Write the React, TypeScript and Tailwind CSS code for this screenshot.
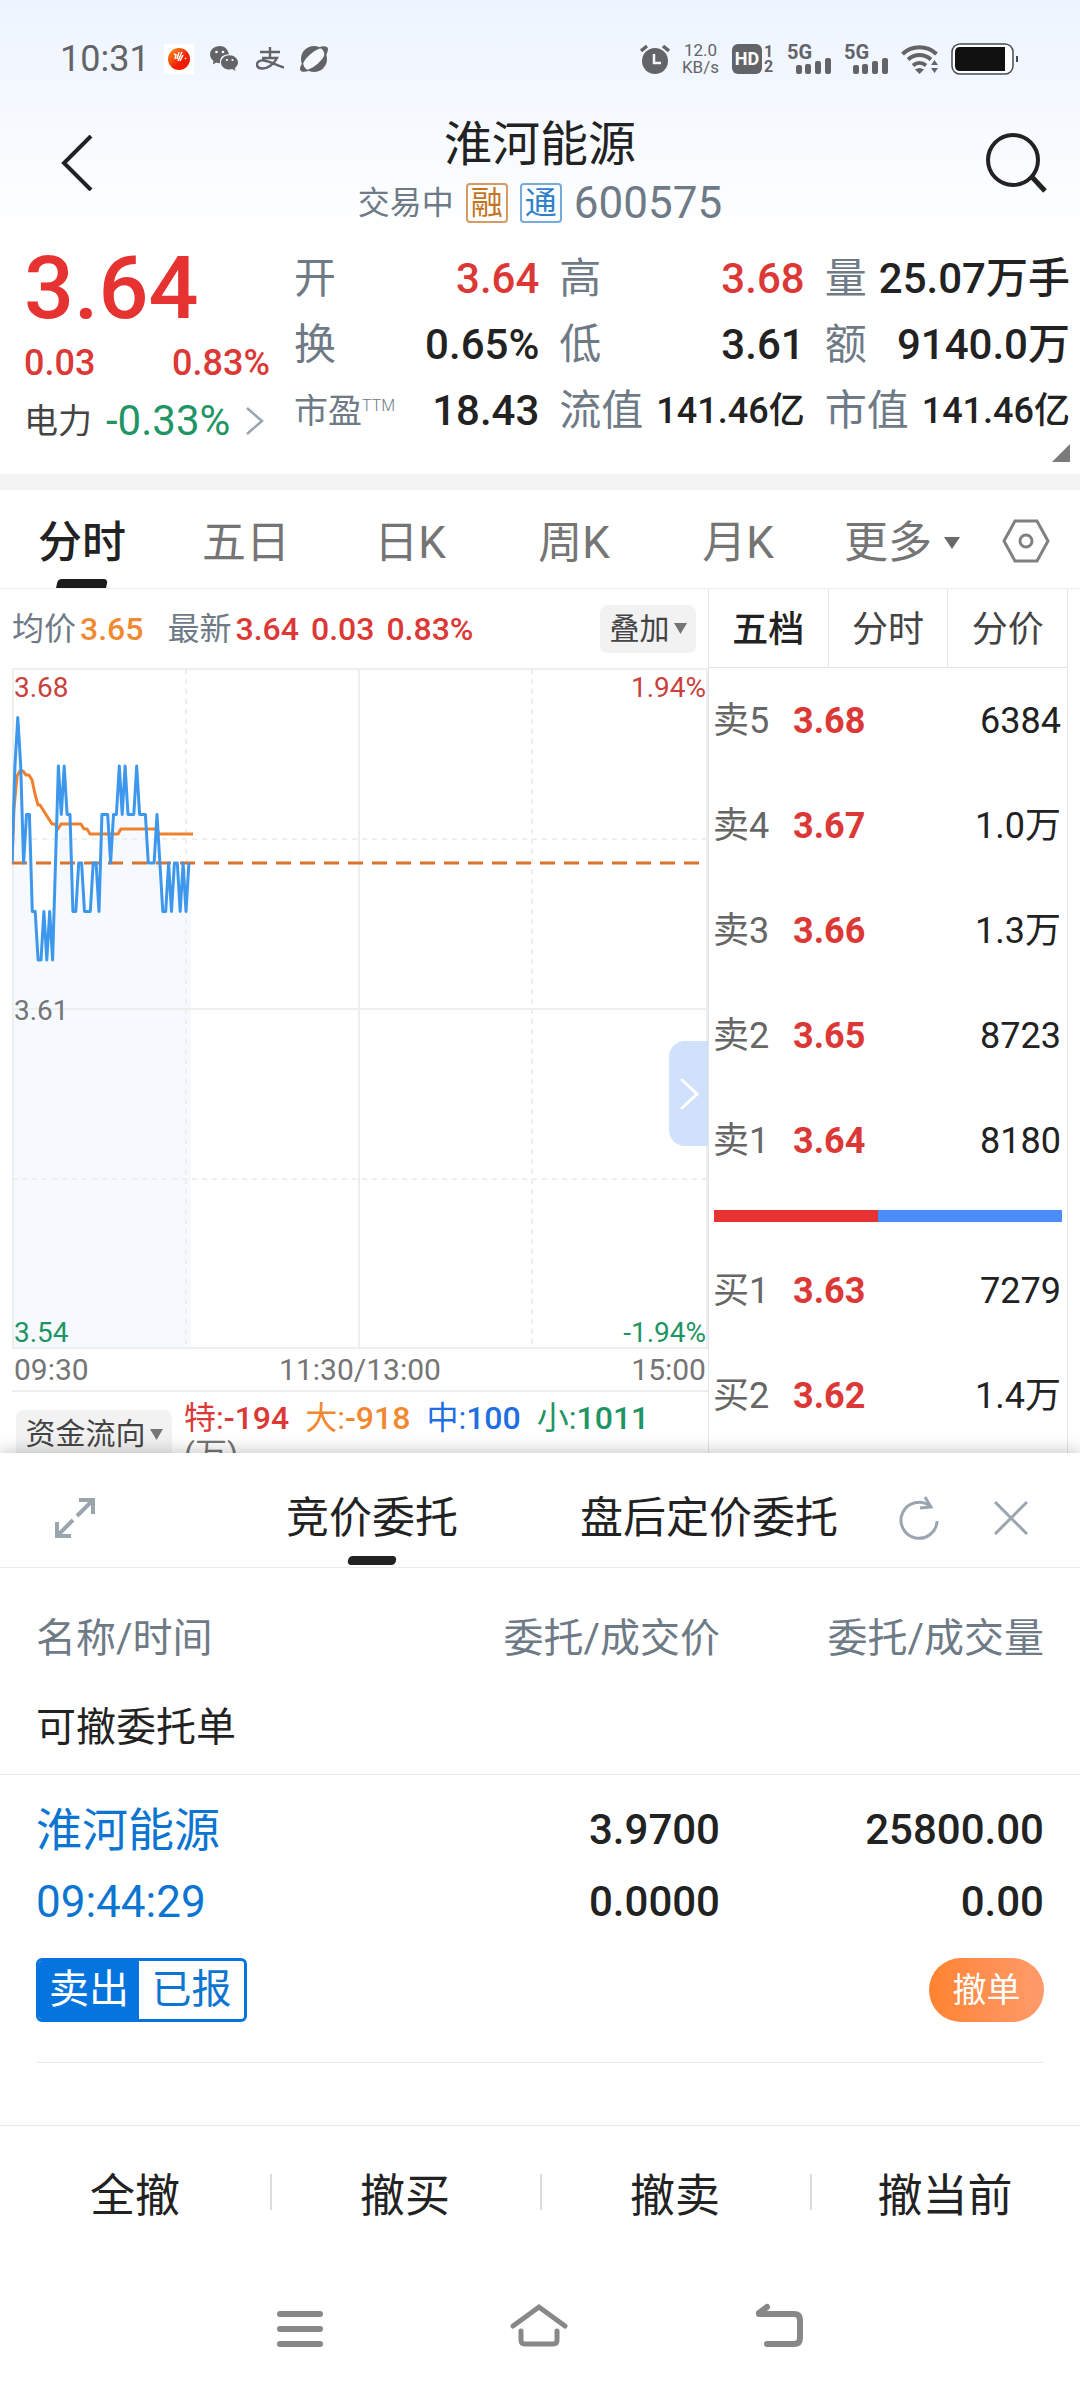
import { ReactNode } from "react";
import clsx from "clsx";

const periods = ["分时", "五日", "日K", "周K", "月K"];

const asks = [
  { label: "卖5", price: "3.68", volume: "6384" },
  { label: "卖4", price: "3.67", volume: "1.0万" },
  { label: "卖3", price: "3.66", volume: "1.3万" },
  { label: "卖2", price: "3.65", volume: "8723" },
  { label: "卖1", price: "3.64", volume: "8180" },
];

const bids = [
  { label: "买1", price: "3.63", volume: "7279" },
  { label: "买2", price: "3.62", volume: "1.4万" },
];

const flows = [
  { text: "特:", value: "-194", color: "text-[#dc3836]" },
  { text: "大:", value: "-918", color: "text-[#f18932]" },
  { text: "中:", value: "100", color: "text-[#1f6fe0]" },
  { text: "小:", value: "1011", color: "text-[#1f9464]" },
];

// price per minute, in cents above or below 3.64
const ticks = [
  0, 2, 3, 2, 0, 1, 1, -1, -1, -2, -2, -1, -2, -1, -2, 0, 2, 1, 2, 1, 1, -1, -1, 0, 0, -1, -1, -1, 0, 0, -1, 1, 1, 1,
  0, 1, 1, 2, 1, 2, 1, 1, 1, 2, 1, 1, 1, 0, 0, 0, 1, 0, -1, -1, 0, -1, 0, 0, -1, 0, -1, 0,
];
const pricePoints = ticks.map((t, i) => `${(i * 2.9).toFixed(1)},${195 - t * 48.5}`).join(" ");
const averagePoints =
  "0,195 2,140 5,108 8,103 11,103 14,107 17,107 20,112 23,126 26,137 28,137 40,156 43,156 46,161 49,156 69,156 72,161 75,161 78,166 106,166 109,161 145,161 147,166 181,166";

const SignalBars = () => (
  <div className="flex h-[30px] w-11 flex-col">
    <span className="text-[20px] font-bold leading-4">5G</span>
    <svg className="-mt-0.5 ml-2 h-4 w-9" viewBox="0 0 36 16" fill="#636467">
      <rect x="1" y="7" width="6" height="9" rx="2" />
      <rect x="10" y="6" width="6" height="10" rx="2" />
      <rect x="20" y="3" width="6" height="13" rx="2" />
      <rect x="30" y="0" width="6" height="16" rx="2" />
    </svg>
  </div>
);

const StatusBar = () => (
  <div className="flex h-[118px] items-center pl-[60px] pr-[62px] text-[#636467]">
    <span className="w-[104px] text-4xl">10:31</span>
    <svg className="h-[30px] w-[30px]" viewBox="0 0 30 30">
      <defs>
        <linearGradient id="ball" x1="0" y1="0" x2="1" y2="1">
          <stop offset="0" stopColor="#ff9a1f" />
          <stop offset="0.6" stopColor="#f01d05" />
        </linearGradient>
      </defs>
      <rect width="30" height="30" fill="#fff" />
      <circle cx="15" cy="15" r="11" fill="url(#ball)" />
      <path d="M10 10l2 1-1 4M15 8l-2 7M18 8l-4 9M19 11l-3 6M21 14l1 1" stroke="#fff" strokeWidth="1.500" fill="none" />
    </svg>
    <svg className="ml-4 h-[26px] w-7" viewBox="0 0 28 26" fill="#636467">
      <path d="M10 0C4 0 0 4 0 8.500c0 2.500 1.300 4.800 3.500 6.300L2.800 18.500l3.400-1.900c1.300.4 2.700.6 4 .5C9 12 13 8 19 8.200 18 3.500 14.500 0 10 0z" />
      <circle cx="6.500" cy="6" r="1.300" fill="#fff" />
      <circle cx="13" cy="6" r="1.300" fill="#fff" />
      <path d="M19.500 9.200c-5 0-8.500 3.300-8.500 7.200s3.800 7.100 8.500 7.100c1 0 2-.1 2.900-.4l3.200 1.900-.8-3c2-1.400 3.200-3.400 3.200-5.600 0-3.900-3.700-7.200-8.500-7.200z" />
      <circle cx="17" cy="14" r="1.100" fill="#fff" />
      <circle cx="22.500" cy="14" r="1.100" fill="#fff" />
    </svg>
    <svg className="ml-[18px] h-6 w-7" viewBox="0 0 28 24" fill="none" stroke="#636467" strokeWidth="2.400">
      <path d="M4 5h20M14 0v11M6 11h15c-3 6-9 10.500-14.500 10.500C2.500 21.500 1 19.500 1 17.500c0-3 3-4.500 7-4 6 .8 12 4.500 20 7" />
    </svg>
    <svg className="ml-[15px] h-[30px] w-[30px]" viewBox="0 0 30 30">
      <circle cx="15" cy="15" r="13" fill="#636467" />
      <ellipse cx="15" cy="15" rx="15" ry="6" transform="rotate(-42 15 15)" fill="#f4f8ff" />
      <path d="M20 3c5-1.500 9-1 9 2 0 2-1 5-4 9 1-5 0-8-5-11zM10 27c-5 1.500-9 1-9-2 0-2 1-4 3-7 0 4 2 7 6 9z" fill="#636467" />
    </svg>

    <svg className="ml-auto h-[30px] w-[30px]" viewBox="0 0 30 30">
      <circle cx="15" cy="17" r="13" fill="#636467" />
      <path d="M1 7l6-5M29 7l-6-5" stroke="#636467" strokeWidth="3.500" />
      <path d="M14 10v9h7" stroke="#f4f8ff" strokeWidth="2.500" fill="none" />
    </svg>
    <div className="ml-3 flex flex-col items-center text-[17px] leading-[17px]">
      <span>12.0</span>
      <span>KB/s</span>
    </div>
    <div className="ml-[13px] flex h-[30px] w-[42px] gap-0.5 font-bold">
      <span className="flex w-[30px] items-center justify-center rounded-md bg-[#636467] text-[18px] text-white">HD</span>
      <span className="flex flex-col text-[16px] leading-[15px]">
        <span>1</span>
        <span>2</span>
      </span>
    </div>
    <div className="ml-[13px] flex gap-[13px]">
      <SignalBars />
      <SignalBars />
    </div>
    <svg className="ml-[13px] h-[30px] w-[38px]" viewBox="0 0 38 30" fill="none" stroke="#636467" strokeWidth="4">
      <path d="M1.500 10C11 1 26 1 35.500 10M7 15.500c7-6 16-6 23 0M12 21.500c4-3.500 9-3.500 13 0" />
      <path d="M14 25.500c3-2 6-2 9 0L18.500 30z" fill="#636467" stroke="none" />
      <path d="M30 21l3.500-5 3.500 5zM30 24l3.500 5 3.500-5z" fill="#636467" stroke="none" />
    </svg>
    <svg className="ml-3 h-8 w-[67px]" viewBox="0 0 67 32">
      <rect x="1" y="1" width="61" height="30" rx="8" fill="#fff" stroke="#444b55" strokeWidth="1.500" />
      <path d="M9 4h45v24H9q-5 0-5-5V9q0-5 5-5z" fill="#111" />
      <rect x="65" y="13" width="2" height="6" fill="#444b55" />
    </svg>
  </div>
);

const Header = () => (
  <header className="flex items-start justify-between px-8 pb-3">
    <button aria-label="返回" className="flex h-[90px] w-[90px] items-center justify-center">
      <svg className="h-14 w-8" viewBox="0 0 32 56" fill="none" stroke="#222" strokeWidth="4">
        <path d="M30 1L3 28l27 27" />
      </svg>
    </button>
    <div className="flex flex-col items-center">
      <h1 className="text-5xl leading-[54px] text-[#222]">淮河能源</h1>
      <div className="mt-2 flex h-[46px] items-center gap-3 text-[32px] text-[#6e7a86]">
        <span>交易中</span>
        <span className="flex h-10 w-[42px] items-center justify-center rounded border-2 border-[#d59b63] text-[#c4741f]">融</span>
        <span className="flex h-10 w-[42px] items-center justify-center rounded border-2 border-[#74abdc] text-[#2f80c8]">通</span>
        <span className="text-[44px]">600575</span>
      </div>
    </div>
    <button aria-label="搜索" className="flex h-[90px] w-[90px] items-center justify-end">
      <svg className="h-[62px] w-[62px]" viewBox="0 0 62 62" fill="none" stroke="#222" strokeWidth="4">
        <circle cx="27" cy="28" r="25" />
        <path d="M46 45l13 14" strokeWidth="5" />
      </svg>
    </button>
  </header>
);

const Stat = ({ label, value, red, small }: { label: ReactNode; value: string; red?: boolean; small?: boolean }) => (
  <div className="flex h-[66px] items-center justify-between whitespace-nowrap">
    <dt className="text-[42px] text-[#6e7a86]">{label}</dt>
    <dd className={clsx("font-medium", small ? "text-4xl" : "text-[42px]", red ? "text-[#dc3836]" : "text-[#222]")}>{value}</dd>
  </div>
);

const Quote = () => (
  <section className="flex border-b-[16px] border-[#f4f4f4] pl-6 pr-2.5">
    <div className="w-[270px] shrink-0">
      <div className="flex h-[100px] items-center text-[88px] font-medium text-[#e63331]">3.64</div>
      <div className="flex h-[50px] items-center justify-between pr-6 text-4xl font-medium text-[#dc3836]">
        <span>0.03</span>
        <span>0.83%</span>
      </div>
      <a href="#" className="flex h-[66px] items-center text-[#444]">
        <span className="w-[82px] text-[34px]">电力</span>
        <span className="w-[140px] text-[42px] text-[#1f9464]">-0.33%</span>
        <svg className="h-7 w-[18px]" viewBox="0 0 18 28" fill="none" stroke="#9aa4ae" strokeWidth="2.500">
          <path d="M1 1l15 13L1 27" />
        </svg>
      </a>
    </div>
    <div className="flex-1">
      <dl className="grid grid-cols-3 gap-x-5 pt-2">
        <Stat label="开" value="3.64" red />
        <Stat label="高" value="3.68" red />
        <Stat label="量" value="25.07万手" />
        <Stat label="换" value="0.65%" />
        <Stat label="低" value="3.61" />
        <Stat label="额" value="9140.0万" />
        <Stat
          label={
            <span className="flex items-start text-[34px]">
              市盈<span className="text-base font-light">TTM</span>
            </span>
          }
          value="18.43"
        />
        <Stat label="流值" value="141.46亿" small />
        <Stat label="市值" value="141.46亿" small />
      </dl>
      <svg className="mb-3 ml-auto h-[18px] w-[18px]" viewBox="0 0 18 18" fill="#7a7a7a">
        <path d="M18 0v18H0z" />
      </svg>
    </div>
  </section>
);

const PeriodTabs = () => (
  <nav className="flex h-[99px] border-b border-[#eee] text-[44px] text-[#757575]">
    {periods.map((name, i) => (
      <button
        key={name}
        className={clsx("relative flex flex-1 items-center justify-center pt-2", i === 0 && "font-medium text-[#222]")}
      >
        {name}
        {i === 0 && <span className="absolute bottom-0 h-[9px] w-[50px] -skew-x-12 rounded-t-sm bg-[#1c1c1c]" />}
      </button>
    ))}
    <button className="flex flex-1 items-center justify-center gap-3 pt-2">
      更多
      <svg className="h-3 w-4" viewBox="0 0 16 12" fill="#6a6a6a">
        <path d="M0 0h16L8 12z" />
      </svg>
    </button>
    <button aria-label="设置" className="flex w-24 items-center pl-[18px] pt-1">
      <svg className="h-[46px] w-12" viewBox="0 0 48 46" fill="none" stroke="#808080" strokeWidth="3">
        <path d="M13 3h22l11 20-11 20H13L2 23z" />
        <circle cx="24" cy="23" r="6" />
      </svg>
    </button>
  </nav>
);

const Chart = () => (
  <div className="relative">
    <svg className="block h-[681px] w-full" viewBox="0 0 696 681" preserveAspectRatio="none" fill="none">
      <polygon points={`0,681 ${pricePoints} 179,195 179,681`} fill="#f6faff" />
      <g stroke="#ebf0ee" strokeWidth="2">
        <path d="M0 341h696M347 1v680" />
        <path d="M0 171h696M0 511h696M174 1v680M520 1v680" strokeDasharray="5 5" />
        <rect x="1" y="1" width="694" height="679" />
      </g>
      <path d="M0 195h690" stroke="#dc722b" strokeWidth="3" strokeDasharray="15 9" />
      <polyline points={averagePoints} stroke="#ee8130" strokeWidth="3" strokeLinejoin="round" />
      <polyline points={pricePoints} stroke="#3d97ec" strokeWidth="3" strokeLinejoin="round" />
    </svg>
    <div className="absolute inset-0 flex flex-col justify-between px-0.5 text-[28px] leading-8">
      <div className="flex justify-between pt-1 text-[#c9413e]">
        <span>3.68</span>
        <span>1.94%</span>
      </div>
      <span className="text-[#757575]">3.61</span>
      <div className="flex justify-between text-[#1f9464]">
        <span>3.54</span>
        <span>-1.94%</span>
      </div>
    </div>
    <button
      aria-label="展开"
      className="absolute right-0 top-[373px] flex h-[105px] w-[39px] items-center justify-center rounded-l-2xl bg-[#cfe1fb]"
    >
      <svg className="h-8 w-5" viewBox="0 0 20 32" fill="none" stroke="#fff" strokeWidth="3" strokeLinecap="round">
        <path d="M3 2l15 14L3 30" />
      </svg>
    </button>
  </div>
);

const Caret = () => (
  <svg className="h-[11px] w-[13px]" viewBox="0 0 13 11" fill="#757575">
    <path d="M0 0h13L6.500 11z" />
  </svg>
);

const Book = () => {
  const row = (r: { label: string; price: string; volume: string }) => (
    <tr key={r.label} className="h-[105px]">
      <th scope="row" className="w-[84px] pl-1 text-left font-normal text-[#666]">
        {r.label}
      </th>
      <td className="font-bold text-[#dc3836]">{r.price}</td>
      <td className="pr-[6px] text-right text-[#222]">{r.volume}</td>
    </tr>
  );

  return (
    <div className="w-[360px] shrink-0 border-x border-[#e4e4e4]">
      <div className="flex h-[79px] divide-x divide-[#e4e4e4] border-b border-[#e4e4e4] text-4xl text-[#444]">
        <button className="flex-1 pt-1 font-medium text-[#222]">五档</button>
        <button className="flex-1 pt-1">分时</button>
        <button className="flex-1 pt-1">分价</button>
      </div>
      <table className="w-full text-4xl">
        <tbody>
          {asks.map(row)}
          <tr className="h-[45px]">
            <td colSpan={3} className="px-[5px]">
              <div className="flex h-3 bg-[#4a8dfb]">
                <div className="w-[47%] bg-[#e63331]" />
              </div>
            </td>
          </tr>
          {bids.map(row)}
        </tbody>
      </table>
    </div>
  );
};

const Market = () => (
  <section className="flex h-[864px] overflow-hidden px-3">
    <div className="min-w-0 flex-1">
      <div className="flex h-[79px] items-center pr-3 text-[32px]">
        <span className="text-[#6e7a86]">均价</span>
        <span className="ml-1 font-medium text-[#f18932]">3.65</span>
        <span className="ml-6 text-[#6e7a86]">最新</span>
        <span className="ml-1 flex gap-3 font-medium text-[#dc3836]">
          <span>3.64</span>
          <span>0.03</span>
          <span>0.83%</span>
        </span>
        <button className="ml-auto flex h-12 w-24 items-center justify-center gap-1 rounded-lg bg-[#f2f2f2] text-[30px] text-[#444]">
          叠加
          <Caret />
        </button>
      </div>
      <Chart />
      <div className="flex h-[43px] items-center justify-between border-b-2 border-[#ebf0ee] px-0.5 text-[30px] text-[#757575]">
        <span>09:30</span>
        <span>11:30/13:00</span>
        <span>15:00</span>
      </div>
      <div className="flex items-start pl-1 text-[32px] leading-9">
        <button className="mt-[18px] flex h-12 w-[156px] shrink-0 items-center justify-center gap-1 rounded-lg bg-[#f2f2f2] text-[30px] text-[#444]">
          资金流向
          <Caret />
        </button>
        <div className="ml-3 pt-2">
          <div className="flex gap-4">
            {flows.map((f) => (
              <span key={f.text} className={f.color}>
                {f.text}
                <span className="font-medium">{f.value}</span>
              </span>
            ))}
          </div>
          <div className="text-[#757575]">(万)</div>
        </div>
      </div>
    </div>
    <Book />
  </section>
);

const Orders = () => (
  <section className="relative flex-1 bg-white shadow-[0_-2px_16px_rgba(0,0,0,0.22)]">
    <div className="flex h-[115px] items-center border-b border-[#ebebeb] pt-4 text-[#222]">
      <button aria-label="全屏" className="flex w-[150px] justify-center">
        <svg className="h-10 w-10" viewBox="0 0 40 40" fill="none" stroke="#9ba5af" strokeWidth="4">
          <path d="M24 2h14v14M38 2L22 18M2 24v14h14M2 38l16-16" />
        </svg>
      </button>
      <div className="flex h-full flex-1 justify-end gap-[122px] pr-11 text-[43px]">
        <button className="relative flex items-center justify-center">
          竞价委托
          <span className="absolute bottom-[2px] h-[9px] w-12 -skew-x-12 rounded-sm bg-[#222]" />
        </button>
        <button>盘后定价委托</button>
      </div>
      <button aria-label="刷新" className="flex w-[74px] justify-center">
        <svg className="h-11 w-10" viewBox="0 0 40 44" fill="none" stroke="#9ba5af" strokeWidth="3">
          <path d="M38 25A18 18 0 1 1 31 10" />
          <path d="M26 1l6 10-11 1" />
        </svg>
      </button>
      <button aria-label="关闭" className="mr-3.5 flex w-[110px] justify-center">
        <svg className="h-[34px] w-[34px]" viewBox="0 0 34 34" fill="none" stroke="#9ba5af" strokeWidth="3">
          <path d="M1 1l32 32M33 1L1 33" />
        </svg>
      </button>
    </div>

    <table className="w-full text-[42px] text-[#222]">
      <thead>
        <tr className="h-[138px] text-[40px] text-[#6e7a86]">
          <th className="pl-9 pt-1 text-left font-normal">名称/时间</th>
          <th className="w-[36%] pt-1 text-right font-normal">委托/成交价</th>
          <th className="w-1/3 pr-9 pt-1 text-right font-normal">委托/成交量</th>
        </tr>
      </thead>
      <tbody>
        <tr className="h-[68px] border-b border-[#ebebeb] text-[40px]">
          <th colSpan={3} scope="rowgroup" className="pb-6 pl-9 text-left font-normal">
            可撤委托单
          </th>
        </tr>
        <tr className="h-[92px]">
          <td className="pl-9 pt-5 text-[46px] text-[#0b75d1]">淮河能源</td>
          <td className="pt-5 text-right font-medium">3.9700</td>
          <td className="pr-9 pt-5 text-right font-medium">25800.00</td>
        </tr>
        <tr className="h-[72px]">
          <td className="pl-9 text-[44px] text-[#0b75d1]">09:44:29</td>
          <td className="text-right font-medium">0.0000</td>
          <td className="pr-9 text-right font-medium">0.00</td>
        </tr>
      </tbody>
    </table>
    <div className="mx-9 flex items-start justify-between border-b border-[#ebebeb] pb-10 pt-5">
      <div className="flex h-16 overflow-hidden rounded-md border-[3px] border-[#0674df] text-[40px] text-[#0b75d1]">
        <span className="flex w-[100px] items-center justify-center bg-[#0674df] text-white">卖出</span>
        <span className="flex w-[105px] items-center justify-center">已报</span>
      </div>
      <button className="h-16 w-[115px] rounded-full bg-linear-to-r from-[#ff832d] to-[#ff9b6b] text-[34px] text-white">撤单</button>
    </div>
    <div className="mt-[62px] flex border-t border-[#ebebeb] py-12 text-[45px] text-[#222]">
      {["全撤", "撤买", "撤卖", "撤当前"].map((name, i) => (
        <button key={name} className="relative h-9 flex-1">
          {i > 0 && <span className="absolute left-0 top-0 h-9 w-0.5 bg-[#ddd]" />}
          {name}
        </button>
      ))}
    </div>
  </section>
);

const SystemNav = () => (
  <nav className="relative flex h-[126px] items-center justify-center gap-[187px] bg-white">
    <button aria-label="菜单">
      <svg className="h-11 w-[46px]" viewBox="0 0 46 44" stroke="#888" strokeWidth="6" strokeLinecap="round">
        <path d="M3 11h40M3 26h40M3 41h40" />
      </svg>
    </button>
    <button aria-label="主页">
      <svg className="h-11 w-[58px]" viewBox="0 0 58 44" fill="none" stroke="#888" strokeWidth="5" strokeLinecap="round">
        <path d="M3 23L29 4l26 19" />
        <path d="M11 28v9q0 4 4 4h28q4 0 4-4v-9" />
      </svg>
    </button>
    <button aria-label="后退">
      <svg className="h-11 w-12" viewBox="0 0 48 44" fill="none" stroke="#888" strokeWidth="6" strokeLinecap="round">
        <path d="M12 41h27q6 0 6-6V17q0-6-6-6H4" />
        <path d="M4 10l8-6" />
      </svg>
    </button>
  </nav>
);

const App = () => {
  return (
    <div className="flex min-h-screen flex-col overflow-hidden bg-white font-['Roboto','Noto_Sans_CJK_SC',sans-serif] leading-none">
      <div className="bg-linear-to-b from-[#edf4ff] to-white">
        <StatusBar />
        <Header />
      </div>
      <Quote />
      <PeriodTabs />
      <Market />
      <Orders />
      <SystemNav />
    </div>
  );
};

export default App;
